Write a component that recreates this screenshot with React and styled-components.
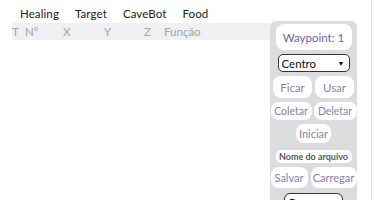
import React from 'react';
import styled, { createGlobalStyle } from 'styled-components';

const GlobalStyle = createGlobalStyle`
  html, body {
    margin: 0;
    padding: 0;
    background: #ffffff;
    font-family: Lato, "Open Sans", sans-serif;
  }
`;

// whole window: main area + side panel
const Page = styled.div`
  display: flex;
  align-items: flex-start;
  width: 372px;
  height: 200px;
  overflow: hidden;
  padding-left: 12px;
  box-sizing: border-box;
  border-right: 1px solid #e4e4e8;
`;

const Main = styled.div`
  width: 258px;
  display: flex;
  flex-direction: column;
`;

const TabBar = styled.div`
  display: flex;
  height: 23px;
  align-items: center;
  padding-top: 3px;
  box-sizing: border-box;
`;

const Tab = styled.div`
  padding: 0 8px;
  font-size: 11.5px;
  letter-spacing: 0.1px;
  color: #222;
`;

const HeaderRow = styled.div`
  display: grid;
  grid-template-columns: 13px 38px 41px 40px 20px 1fr;
  height: 17px;
  align-items: center;
  background: #eef0f4;
  font-size: 11.5px;
  color: #a3a3a8;
`;

// right column with the control buttons
const Panel = styled.div`
  width: 87px;
  margin-top: 21px;
  padding: 3px 0 0;
  background: #dcdcdf;
  border-radius: 6px;
  display: flex;
  flex-direction: column;
  align-items: center;
  gap: 4px;
  height: 200px;
  box-sizing: border-box;
`;

const Row = styled.div`
  display: flex;
  justify-content: center;
  gap: ${p => p.$gap || 3}px;
  width: 91px;
`;

const Button = styled.div`
  display: flex;
  align-items: center;
  justify-content: center;
  height: ${p => p.$h || 22}px;
  width: ${p => p.$w}px;
  background: #ffffff;
  border-radius: 8px;
  color: ${p => (p.$accent ? '#6767b0' : '#8585a8')};
  font-size: ${p => p.$fs || 11.5}px;
  white-space: nowrap;
  box-sizing: border-box;
`;

const Select = styled.div`
  display: flex;
  align-items: center;
  justify-content: space-between;
  width: 72px;
  height: 18px;
  padding: 0 4px 0 3px;
  border: 1px solid #333;
  border-radius: 5px;
  background: #fff;
  color: #111;
  font-size: 11.5px;
  box-sizing: border-box;
`;

const Arrow = styled.span`
  font-size: 7px;
  color: #111;
`;

const FileField = styled.div`
  display: flex;
  align-items: center;
  justify-content: center;
  width: 76px;
  height: 13px;
  margin-top: 3px;
  background: #fff;
  border-radius: 5px;
  font-size: 9px;
  font-weight: 700;
  color: #5a5a5a;
`;

const Browse = styled.div`
  width: 59px;
  height: 20px;
  margin-top: 1px;
  padding: 2px 0 0 4px;
  border: 1px solid #333;
  border-radius: 6px;
  background: #fff;
  font-size: 11.5px;
  color: #111;
  box-sizing: border-box;
`;

const App = () => {
  return (
    <>
      <GlobalStyle />
      <Page>
        <Main>
          <TabBar>
            <Tab>Healing</Tab>
            <Tab>Target</Tab>
            <Tab>CaveBot</Tab>
            <Tab>Food</Tab>
          </TabBar>
          <HeaderRow>
            <span>T</span>
            <span>N°</span>
            <span>X</span>
            <span>Y</span>
            <span>Z</span>
            <span>Função</span>
          </HeaderRow>
        </Main>
        <Panel>
          <Button $accent $w={76} $h={26}>Waypoint: 1</Button>
          <Select>
            Centro <Arrow>▼</Arrow>
          </Select>
          <Row>
            <Button $w={39}>Ficar</Button>
            <Button $w={39}>Usar</Button>
          </Row>
          <Row $gap={2}>
            <Button $w={41} $h={18} $fs={10.5}>Coletar</Button>
            <Button $w={43} $h={18} $fs={10.5}>Deletar</Button>
          </Row>
          <Button $w={35} $h={19} $fs={11}>Iniciar</Button>
          <FileField>Nome do arquivo</FileField>
          <Row>
            <Button $w={37} $h={21} $fs={11}>Salvar</Button>
            <Button $w={46} $h={21} $fs={11}>Carregar</Button>
          </Row>
          <Browse>Procurar</Browse>
        </Panel>
      </Page>
    </>
  );
};

export default App;
